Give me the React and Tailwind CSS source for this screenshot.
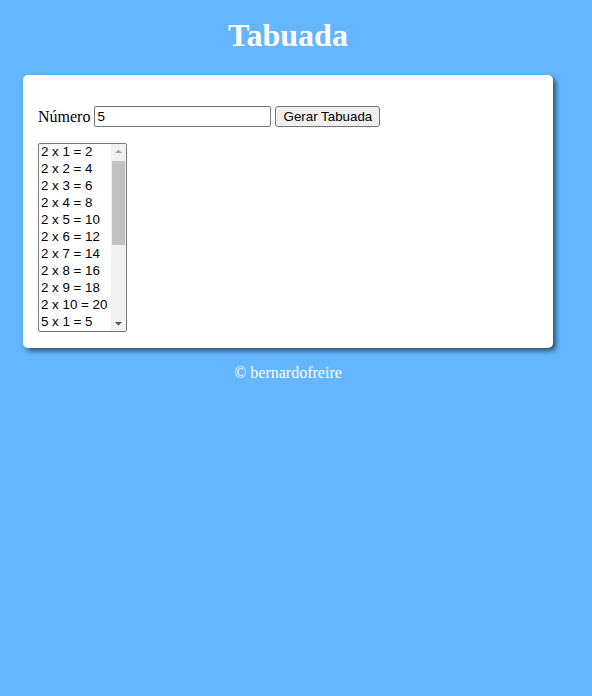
import React, { useState } from 'react';

function buildRows(nums) {
  const rows = [];
  nums.forEach((n) => {
    for (let i = 1; i <= 10; i++) rows.push(`${n} x ${i} = ${n * i}`);
  });
  return rows;
}

// listbox drawn by hand so the classic scrollbar shows up
function TabList({ rows }) {
  const visible = rows.slice(0, 11);
  return (
    <div className="mt-[16px] flex h-[189px] w-[89px] overflow-hidden rounded-[2px] border border-[#767676] bg-white font-['Liberation_Sans',Arial,sans-serif] text-[13.33px] leading-[17px]">
      <ul className="-mt-[1px] flex-1 pl-[2px] whitespace-nowrap">
        {visible.map((r, i) => (
          <li key={i} className="h-[17px]">{r}</li>
        ))}
      </ul>
      <div className="flex w-[15px] flex-col items-center bg-[#f1f1f1]">
        <svg width="15" height="15" viewBox="0 0 15 15" className="shrink-0">
          <path d="M4 9 L7.5 5.5 L11 9 Z" fill="#a3a3a3" />
        </svg>
        <div className="mt-[2px] h-[84px] w-[13px] bg-[#c1c1c1]" />
        <div className="flex-1" />
        <svg width="15" height="15" viewBox="0 0 15 15" className="shrink-0">
          <path d="M4 6 L7.5 9.5 L11 6 Z" fill="#505050" />
        </svg>
      </div>
    </div>
  );
}

export default function App() {
  const [numero, setNumero] = useState('5');
  const [rows, setRows] = useState(buildRows([2, 5]));

  const gerar = () => {
    const n = Number(numero);
    if (!numero || Number.isNaN(n)) return;
    setRows((prev) => [...prev, ...buildRows([n])]);
  };

  return (
    <div className="min-h-[696px] bg-[#63b6ff] font-['Liberation_Serif',serif] text-base text-black">
      <div className="w-[576px] pt-[17px]">
        <h1 className="text-center text-[32px] leading-[37px] font-bold text-white">Tabuada</h1>

        <div className="mx-auto mt-[21px] w-[530px] rounded-[5px] bg-white px-[15px] pt-[31px] pb-[16px] shadow-[3px_3px_5px_rgba(0,0,0,0.55)]">
          <div className="flex items-center h-[21px]">
            <span>Número</span>
            <input
              type="text"
              value={numero}
              onChange={(e) => setNumero(e.target.value)}
              className="ml-[4px] h-[21px] w-[177px] rounded-[2px] border border-[#767676] px-[2px] font-['Liberation_Sans',Arial,sans-serif] text-[13.33px] outline-none"
            />
            <button
              onClick={gerar}
              className="ml-[4px] h-[21px] w-[105px] rounded-[3px] border border-[#767676] bg-[#efefef] font-['Liberation_Sans',Arial,sans-serif] text-[13.33px]"
            >
              Gerar Tabuada
            </button>
          </div>

          <TabList rows={rows} />
        </div>

        <p className="mt-[16px] text-center leading-[18px] text-white">© bernardofreire</p>
      </div>
    </div>
  );
}
